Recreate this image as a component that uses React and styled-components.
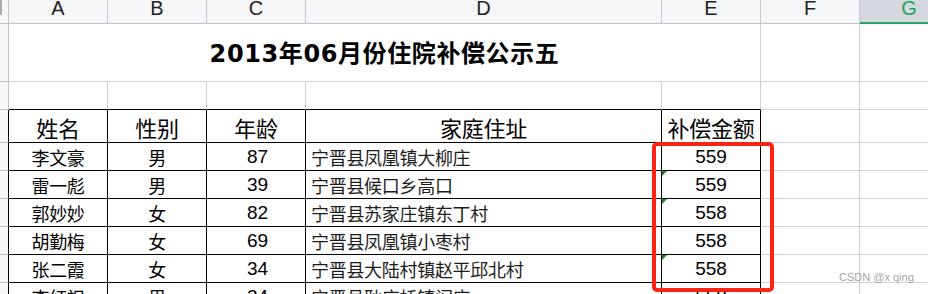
import React from "react";
import styled, { createGlobalStyle, css } from "styled-components";

const Global = createGlobalStyle`
  html, body { margin: 0; padding: 0; background: #fff; }
  body { width: 928px; height: 294px; overflow: hidden; }
`;

const GRAY = "#cdd0d8";
const HEAD_LINE = "#c0c4cc";
const BLACK = "#000";

const Page = styled.div`
  position: relative;
  width: 928px;
  height: 294px;
  overflow: hidden;
`;

const Sheet = styled.div`
  display: grid;
  grid-template-columns: 9px 99px 99px 99px 356px 99px 99px 99px;
  grid-template-rows: 24px 58px 28px 33px repeat(6, 28px);
`;

const Cell = styled.div`
  box-sizing: border-box;
  position: relative;
  display: flex;
  align-items: center;
  justify-content: ${(p) => p.$align || "center"};
  border-right: 1px solid ${(p) => p.$rb || GRAY};
  border-bottom: 1px solid ${(p) => p.$bb || GRAY};
  ${(p) => p.$span && css`grid-column: span ${p.$span};`}
  color: #000;
  white-space: nowrap;
  overflow: hidden;
`;

const ColHead = styled.div`
  box-sizing: border-box;
  display: flex;
  justify-content: center;
  align-items: flex-start;
  background: ${(p) => (p.$active ? "#d5d8de" : "#f5f6f8")};
  border-right: 1px solid ${(p) => (p.$active ? "#d5d8de" : "#c6c9d0")};
  border-bottom: ${(p) => (p.$active ? "2px solid #1fa463" : `1px solid ${HEAD_LINE}`)};
  font-family: "Liberation Sans", Arial, sans-serif;
  font-size: 20px;
  line-height: 16px;
  color: ${(p) => (p.$active ? "#1fa463" : "#1e1e1e")};
`;

const RowHead = styled.div`
  box-sizing: border-box;
  background: #f5f6f8;
  border-right: 1px solid ${(p) => (p.$dark ? BLACK : HEAD_LINE)};
  border-bottom: 1px solid ${HEAD_LINE};
`;

const Corner = styled(RowHead)`
  position: relative;
  &::before {
    content: "";
    position: absolute;
    left: 0;
    top: 0;
    width: 2px;
    height: 15px;
    background: #a8abb2;
  }
`;

const Title = styled.div`
  font-family: "DejaVu Sans", "Noto Sans CJK SC", sans-serif;
  font-weight: bold;
  font-size: 24px;
  letter-spacing: 0.6px;
  line-height: 28px;
  margin-top: 2px;
  color: #000;
`;

const HeadText = styled.span`
  font-family: "Noto Sans CJK SC", sans-serif;
  font-size: 22px;
  line-height: 26px;
  margin-top: 2px;
  letter-spacing: -0.3px;
`;

const NameText = styled.span`
  font-family: "Noto Sans CJK SC", sans-serif;
  font-size: 18px;
  line-height: 22px;
  letter-spacing: -0.3px;
`;

const NumText = styled.span`
  font-family: "Liberation Sans", Arial, sans-serif;
  font-size: 19px;
  line-height: 22px;
  ${(p) => p.$shift && css`margin-left: ${p.$shift}px;`}
`;

const AddrText = styled.span`
  font-family: "Noto Sans CJK SC", sans-serif;
  font-size: 18px;
  line-height: 22px;
  letter-spacing: -0.3px;
  color: #1c1c1c;
  padding-left: 5px;
`;

const Flag = styled.span`
  position: absolute;
  left: 0;
  top: 0;
  width: 0;
  height: 0;
  border-top: 5px solid #118a1e;
  border-right: 5px solid transparent;
`;

const Highlight = styled.div`
  position: absolute;
  left: 652px;
  top: 142px;
  width: 122px;
  height: 150px;
  box-sizing: border-box;
  border: 4px solid #fd2216;
  border-radius: 5px;
  pointer-events: none;
`;

const Watermark = styled.div`
  position: absolute;
  left: 839px;
  top: 270px;
  font-family: "Liberation Sans", Arial, sans-serif;
  font-size: 11px;
  line-height: 14px;
  color: rgba(120, 120, 120, 0.7);
  white-space: nowrap;
`;

const cols = ["A", "B", "C", "D", "E", "F", "G"];

const rows = [
  ["李文豪", "男", "87", "宁晋县凤凰镇大柳庄", "559", false],
  ["雷一彪", "男", "39", "宁晋县候口乡高口", "559", true],
  ["郭妙妙", "女", "82", "宁晋县苏家庄镇东丁村", "558", true],
  ["胡勤梅", "女", "69", "宁晋县凤凰镇小枣村", "558", false],
  ["张二霞", "女", "34", "宁晋县大陆村镇赵平邱北村", "558", true],
  ["李红祝", "男", "24", "宁晋县耿庄桥镇阎庄", "558", false],
];

const headers = ["姓名", "性别", "年龄", "家庭住址", "补偿金额"];

export default function App() {
  return (
    <Page>
      <Global />
      <Sheet>
        <Corner />
        {cols.map((c) => (
          <ColHead key={c} $active={c === "G"}>
            {c}
          </ColHead>
        ))}

        <RowHead />
        <Cell $span={5}>
          <Title>2013年06月份住院补偿公示五</Title>
        </Cell>
        <Cell />
        <Cell />

        <RowHead />
        {[0, 1, 2, 3, 4].map((i) => (
          <Cell key={i} $bb={BLACK} />
        ))}
        <Cell />
        <Cell />

        <RowHead $dark />
        {headers.map((h) => (
          <Cell key={h} $rb={BLACK} $bb={BLACK}>
            <HeadText>{h}</HeadText>
          </Cell>
        ))}
        <Cell />
        <Cell />

        {rows.map(([name, sex, age, addr, amt, flag]) => (
          <React.Fragment key={name}>
            <RowHead $dark />
            <Cell $rb={BLACK} $bb={BLACK}>
              <NameText>{name}</NameText>
            </Cell>
            <Cell $rb={BLACK} $bb={BLACK}>
              <NameText>{sex}</NameText>
            </Cell>
            <Cell $rb={BLACK} $bb={BLACK}>
              <NumText $shift={3}>{age}</NumText>
            </Cell>
            <Cell $rb={BLACK} $bb={BLACK} $align="flex-start">
              <AddrText>{addr}</AddrText>
            </Cell>
            <Cell $rb={BLACK} $bb={BLACK}>
              {flag && <Flag />}
              <NumText>{amt}</NumText>
            </Cell>
            <Cell />
            <Cell />
          </React.Fragment>
        ))}
      </Sheet>
      <Highlight />
      <Watermark>CSDN @x qing</Watermark>
    </Page>
  );
}
